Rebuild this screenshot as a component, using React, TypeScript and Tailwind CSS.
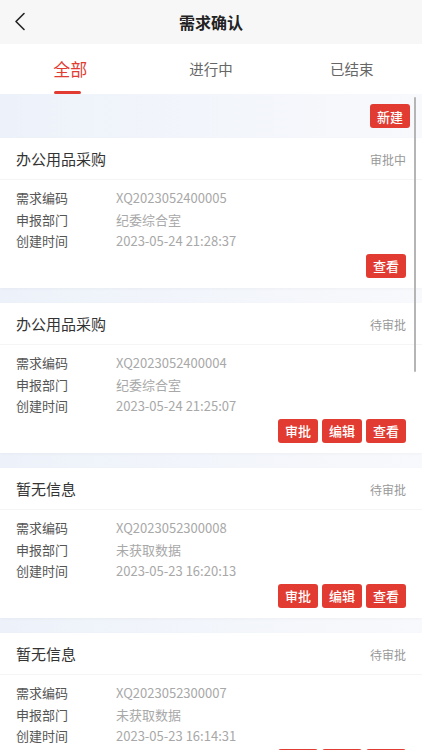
import React from "react";

type Item = {
  title: string;
  status: string;
  code: string;
  dept: string;
  time: string;
  actions: string[];
};

const items: Item[] = [
  { title: "办公用品采购", status: "审批中", code: "XQ2023052400005", dept: "纪委综合室", time: "2023-05-24 21:28:37", actions: ["查看"] },
  { title: "办公用品采购", status: "待审批", code: "XQ2023052400004", dept: "纪委综合室", time: "2023-05-24 21:25:07", actions: ["审批", "编辑", "查看"] },
  { title: "暂无信息", status: "待审批", code: "XQ2023052300008", dept: "未获取数据", time: "2023-05-23 16:20:13", actions: ["审批", "编辑", "查看"] },
  { title: "暂无信息", status: "待审批", code: "XQ2023052300007", dept: "未获取数据", time: "2023-05-23 16:14:31", actions: ["审批", "编辑", "查看"] },
];

function RedButton({ label }: { label: string }) {
  return (
    <button className="h-[24px] w-[40px] rounded-[3px] bg-[#e23c32] text-[13px] font-medium leading-none text-white">
      {label}
    </button>
  );
}

function Card({ item }: { item: Item }) {
  return (
    <div className="h-[150px] bg-white shadow-[0_1px_3px_rgba(0,0,0,0.03)]">
      <div className="flex h-[42px] items-center justify-between border-b border-[#f5f5f5] px-4 pt-[2px]">
        <span className="text-[15px] text-[#333]">{item.title}</span>
        <span className="text-[12px] text-[#999]">{item.status}</span>
      </div>
      <div className="flex flex-col px-4 pt-[7px] text-[13px] leading-[21.5px]">
        {[
          ["需求编码", item.code],
          ["申报部门", item.dept],
          ["创建时间", item.time],
        ].map(([k, v]) => (
          <div key={k} className="flex">
            <span className="w-[100px] text-[#555]">{k}</span>
            <span className="text-[#a8a8a8]">{v}</span>
          </div>
        ))}
      </div>
      <div className="mt-[2px] flex justify-end gap-[4px] px-4">
        {item.actions.map((a) => (
          <RedButton key={a} label={a} />
        ))}
      </div>
    </div>
  );
}

export default function App() {
  return (
    <div
      className="relative flex h-[750px] w-[422px] flex-col overflow-hidden bg-white"
      style={{ fontFamily: '"Noto Sans CJK SC", "Noto Sans", sans-serif' }}
    >
      {/* nav bar */}
      <div className="relative flex h-[44px] shrink-0 items-center justify-center bg-[#f7f7f7]">
        <svg className="absolute left-[13px] top-[12px]" width="14" height="19" viewBox="0 0 14 19" fill="none">
          <path d="M11 1.5 L3 9.5 L11 17.5" stroke="#222" strokeWidth="1.6" strokeLinecap="round" strokeLinejoin="round" />
        </svg>
        <span className="text-[16px] font-bold text-[#222]">需求确认</span>
      </div>

      {/* tabs */}
      <div className="grid h-[50px] shrink-0 grid-cols-3 bg-white">
        <div className="relative flex items-center justify-center">
          <span className="text-[17px] text-[#e23c32]">全部</span>
          <span className="absolute bottom-[0px] left-[54px] h-[3px] w-[27px] rounded-full bg-[#e23c32]" />
        </div>
        <div className="flex items-center justify-center">
          <span className="text-[14.5px] text-[#666]">进行中</span>
        </div>
        <div className="flex items-center justify-center">
          <span className="text-[14.5px] text-[#666]">已结束</span>
        </div>
      </div>

      {/* content */}
      <div className="flex flex-1 flex-col bg-gradient-to-r from-[#edf2fa] to-[#f8f9fc]">
        <div className="flex justify-end pr-[12px] pt-[10px]">
          <RedButton label="新建" />
        </div>
        <div className="mt-[10px] flex flex-col gap-[15px]">
          {items.map((it, i) => (
            <Card key={i} item={it} />
          ))}
        </div>
      </div>

      {/* scroll indicator */}
      <div className="absolute right-[6px] top-[97px] h-[275px] w-[2.5px] rounded-full bg-[#b5b5b5]" />
    </div>
  );
}
